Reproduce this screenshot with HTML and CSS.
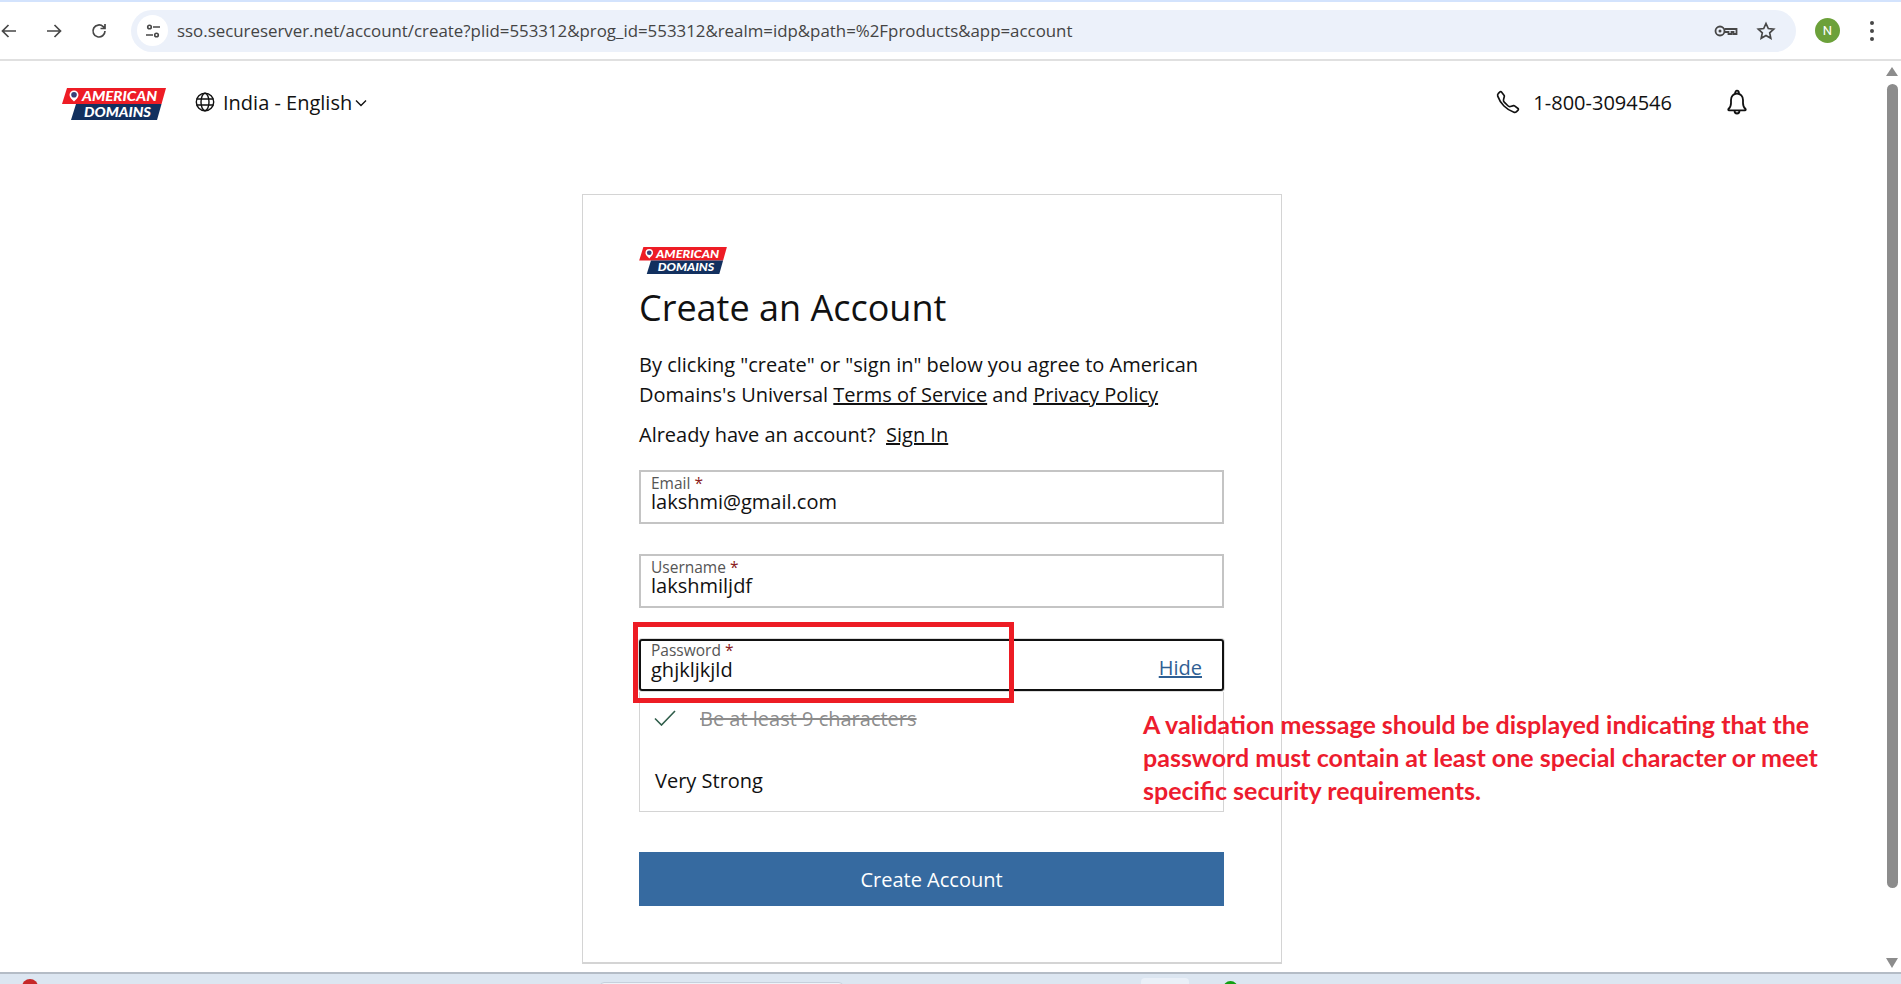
FILE: index.html
```html
<!DOCTYPE html>
<html lang="en">
<head>
<meta charset="utf-8">
<title>Create an Account</title>
<link rel="stylesheet" href="styles.css">
</head>
<body>
<div class="window">
  <div class="tabstrip"></div>
  <div class="toolbar">
    <div class="nav">
      <svg class="nav-icon" viewBox="0 0 20 20"><path d="M17 10H3.500M9.500 4l-6 6 6 6"/></svg>
      <svg class="nav-icon" viewBox="0 0 20 20"><path d="M3 10h13.500M10.500 4l6 6-6 6"/></svg>
      <svg class="nav-icon" viewBox="0 0 20 20"><path d="M16 10a6 6 0 1 1-1.800-4.300L16 7.500M16 3v4.500h-4.500"/></svg>
    </div>
    <div class="omnibox">
      <span class="tune"><svg viewBox="0 0 16 16"><circle cx="4.500" cy="4" r="1.800"/><path d="M8 4h7M1 12h7"/><circle cx="11.500" cy="12" r="1.800"/></svg></span>
      <span class="url">sso.secureserver.net/account/create?plid=553312&amp;prog_id=553312&amp;realm=idp&amp;path=%2Fproducts&amp;app=account</span>
      <svg class="key" viewBox="0 0 24 14"><circle cx="6" cy="7" r="4.500"/><circle cx="6" cy="7" r="1.500" class="fill"/><path d="M10.500 5h12v5h-3V8h-2v2h-3V8h-4"/></svg>
      <svg class="star" viewBox="0 0 20 20"><path d="M10 2.500l2.300 5 5.400.6-4 3.700 1.100 5.400-4.800-2.800-4.800 2.800 1.100-5.400-4-3.700 5.400-.6z"/></svg>
    </div>
    <div class="avatar">N</div>
    <div class="kebab"><i></i><i></i><i></i></div>
  </div>
  <div class="viewport">
    <div class="page">
      <header class="site-header">
        <div class="header-left">
          <svg class="logo logo-lg" viewBox="0 0 104 32"><polygon points="5,0 104,0 99.500,16 0,16" fill="#ee1c25"/><polygon points="14,16 99.500,16 95,32 9,32" fill="#12305f"/><path d="M12 2.500a4.500 4.500 0 0 1 4.500 4.500c0 2.500-2.500 4.500-4.500 6.500-2-2-4.500-4-4.500-6.500A4.500 4.500 0 0 1 12 2.500z" fill="#fff"/><circle cx="12" cy="6.800" r="2.800" fill="#3a3f78"/><text x="20" y="13" textLength="75" lengthAdjust="spacingAndGlyphs" class="logo-t">AMERICAN</text><text x="22" y="29" textLength="67" lengthAdjust="spacingAndGlyphs" class="logo-t">DOMAINS</text></svg>
          <div class="locale">
            <svg class="globe" viewBox="0 0 20 20"><circle cx="10" cy="10" r="8.700"/><ellipse cx="10" cy="10" rx="4" ry="8.700"/><path d="M1.500 7h17M1.500 13h17"/></svg>
            <span>India - English</span>
            <svg class="chev" viewBox="0 0 12 8"><path d="M1 1.500l5 5 5-5"/></svg>
          </div>
        </div>
        <div class="header-right">
          <svg class="phone" viewBox="0 0 16 16"><path d="M3.654 1.328a.678.678 0 0 0-1.015-.063L1.605 2.300c-.483.484-.661 1.169-.45 1.770a17.600 17.600 0 0 0 4.168 6.608 17.600 17.600 0 0 0 6.608 4.168c.601.211 1.286.033 1.770-.45l1.034-1.034a.678.678 0 0 0-.063-1.015l-2.307-1.794a.68.68 0 0 0-.58-.122l-2.190.547a1.750 1.750 0 0 1-1.657-.459L5.482 8.062a1.750 1.750 0 0 1-.46-1.657l.548-2.190a.68.68 0 0 0-.122-.58z"/></svg>
          <span class="phone-num">1-800-3094546</span>
          <svg class="bell" viewBox="0 0 22 26"><path d="M2.500 20c1.800-1.500 2.500-3.500 2.500-6v-3c0-3.500 2.500-6.500 6-6.500s6 3 6 6.500v3c0 2.500.7 4.500 2.500 6 .5.500.2 1.300-.5 1.300H3c-.7 0-1-.8-.5-1.300zM9 4.700c0-1.500.8-3 2-3s2 1.500 2 3M8.500 21.500c0 1.700 1.200 3 2.500 3s2.500-1.300 2.500-3"/></svg>
        </div>
      </header>
      <main class="card">
        <svg class="logo logo-sm" viewBox="0 0 104 32"><polygon points="5,0 104,0 99.500,16 0,16" fill="#ee1c25"/><polygon points="14,16 99.500,16 95,32 9,32" fill="#12305f"/><path d="M12 2.500a4.500 4.500 0 0 1 4.500 4.500c0 2.500-2.500 4.500-4.500 6.500-2-2-4.500-4-4.500-6.500A4.500 4.500 0 0 1 12 2.500z" fill="#fff"/><circle cx="12" cy="6.800" r="2.800" fill="#3a3f78"/><text x="20" y="13" textLength="75" lengthAdjust="spacingAndGlyphs" class="logo-t">AMERICAN</text><text x="22" y="29" textLength="67" lengthAdjust="spacingAndGlyphs" class="logo-t">DOMAINS</text></svg>
        <h1>Create an Account</h1>
        <p class="terms">By clicking "create" or "sign in" below you agree to American Domains's Universal <a href="#">Terms of Service</a> and <a href="#">Privacy Policy</a></p>
        <p class="signin">Already have an account?&nbsp; <a href="#">Sign In</a></p>
        <div class="field field-email">
          <label>Email <b>*</b></label>
          <div class="value">lakshmi@gmail.com</div>
        </div>
        <div class="field">
          <label>Username <b>*</b></label>
          <div class="value">lakshmiljdf</div>
        </div>
        <div class="pw-group">
          <div class="field field-focus">
            <div>
              <label>Password <b>*</b></label>
              <div class="value">ghjkljkjld</div>
            </div>
            <a href="#" class="hide">Hide</a>
          </div>
          <div class="rules">
            <div class="rule">
              <svg class="check" viewBox="0 0 22 16"><path d="M1 8.500l6.500 6.500L21 1"/></svg>
              <s>Be at least 9 characters</s>
            </div>
            <div class="strength">Very Strong</div>
          </div>
        </div>
        <button class="submit" type="button">Create Account</button>
      </main>
      <div class="highlight"></div>
      <p class="annotation">A validation message should be displayed indicating that the<br>password must contain at least one special character or meet<br>specific security requirements.</p>
    </div>
    <div class="scrollbar">
      <span class="arrow up"></span>
      <span class="thumb"></span>
      <span class="arrow down"></span>
    </div>
  </div>
  <div class="taskbar">
    <span class="tb-red"></span>
    <span class="tb-search"></span>
    <span class="tb-active"></span>
    <span class="tb-green"></span>
  </div>
</div>
</body>
</html>
```
FILE: styles.css
```css
* { box-sizing: border-box; }
html, body { margin: 0; height: 100%; overflow: hidden; }
body { font-family: "Open Sans", sans-serif; color: #111; background: #fff; }
.window { width: 1901px; height: 984px; display: flex; flex-direction: column; }
.tabstrip { height: 2px; background: #d3e3fd; flex: none; }
.toolbar { height: 59px; flex: none; display: flex; align-items: center; border-bottom: 2px solid #e0e0e0; background: #fff; }
.nav { display: flex; align-items: center; gap: 25px; width: 131px; padding-left: 0; flex: none; margin-left: -1px; margin-right: 1px; }
.nav-icon { width: 20px; height: 20px; fill: none; stroke: #474747; stroke-width: 1.700; flex: none; }
.omnibox { width: 1665px; height: 42px; border-radius: 21px; background: #ecf1fa; display: flex; align-items: center; padding: 0 20px 0 6px; flex: none; }
.tune { width: 31px; height: 31px; border-radius: 50%; background: #fff; display: flex; align-items: center; justify-content: center; flex: none; }
.tune svg { width: 16px; height: 16px; fill: none; stroke: #474747; stroke-width: 1.600; }
.url { font-size: 16.870px; color: #444; margin-left: 9px; flex: 1; white-space: nowrap; }
.key { width: 24px; height: 14px; fill: none; stroke: #474747; stroke-width: 1.800; margin-right: 18px; }
.key .fill { fill: #474747; stroke: none; }
.star { width: 20px; height: 20px; fill: none; stroke: #474747; stroke-width: 1.700; }
.avatar { width: 25px; height: 25px; border-radius: 50%; background: #6ca13a; color: #fff; font-family: "Roboto", sans-serif; font-size: 13px; display: flex; align-items: center; justify-content: center; margin-left: 19px; flex: none; }
.kebab { display: flex; flex-direction: column; gap: 4px; margin-left: 30px; flex: none; }
.kebab i { width: 4px; height: 4px; border-radius: 50%; background: #474747; display: block; }
.viewport { flex: 1; position: relative; display: flex; min-height: 0; }
.page { flex: 1; position: relative; min-width: 0; }
.site-header { height: 50px; margin-top: 16px; display: flex; justify-content: space-between; align-items: center; padding: 0 153px 0 62px; }
.header-left, .header-right { display: flex; align-items: center; }
.logo { display: block; flex: none; }
.logo-lg { width: 104px; height: 32px; margin-top: 3px; }
.logo-sm { width: 88px; height: 27px; }
.logo-t { font-family: "Lato", sans-serif; font-weight: 900; font-style: italic; font-size: 14px; fill: #fff; }
.locale { display: flex; align-items: center; margin-left: 29px; font-size: 20px; }
.globe { width: 20px; height: 20px; fill: none; stroke: #111; stroke-width: 1.400; margin-right: 8px; }
.chev { width: 12px; height: 8px; fill: none; stroke: #111; stroke-width: 1.400; margin-left: 3px; margin-top: 2px; }
.phone { width: 24px; height: 24px; fill: none; stroke: #111; stroke-width: 1.100; }
.phone-num { font-size: 20px; margin-left: 13px; }
.bell { width: 22px; height: 26px; fill: none; stroke: #111; stroke-width: 1.800; margin-left: 54px; }
.card { position: absolute; left: 582px; top: 133px; width: 700px; height: 770px; border: 1px solid #d4d4d4; border-bottom-width: 2px; padding: 52px 56px 0; background: #fff; }
h1 { font-size: 36px; font-weight: 400; line-height: 49px; margin: 9px 0 0; }
.terms { font-size: 20px; line-height: 30px; margin: 18px 0 0; width: 560px; }
.terms a, .signin a { color: #111; text-decoration: underline; }
.signin { font-size: 20px; line-height: 30px; margin: 10px 0 0; }
.field { width: 585px; height: 54px; border: 2px solid #c4c4c4; padding: 4px 10px 0; margin-bottom: 30px; }
.field-email { margin-top: 20px; }
.field label { display: block; font-size: 15.500px; line-height: 14px; color: #555; }
.field label b { font-weight: 400; color: #8b1a1a; }
.value { font-size: 20px; line-height: 24px; color: #111; }
.pw-group { width: 585px; margin-top: 31px; }
.field-focus { height: 52px; border-color: #111; border-radius: 3px; margin-bottom: 0; display: flex; justify-content: space-between; padding: 2px 20px 0 10px; box-shadow: 0 0 0 1px #ddd; }
.field-focus .value { margin-top: 1px; }
.hide { font-size: 20px; color: #2f5f94; text-decoration: underline; align-self: center; margin-top: 3px; }
.rules { height: 120px; border: 1px solid #d4d4d4; border-top: 0; margin-top: 1px; }
.rule { display: flex; align-items: center; height: 52px; padding-left: 14px; font-size: 20px; color: #8c8c8c; }
.check { width: 22px; height: 16px; fill: none; stroke: #2f5d4a; stroke-width: 1.600; margin-right: 24px; }
.strength { font-size: 20px; padding-left: 15px; margin-top: 21px; line-height: 32px; }
.submit { display: block; width: 585px; height: 54px; margin-top: 40px; background: #366aa0; border: 0; color: #fff; font: 400 20px "Open Sans", sans-serif; }
.highlight { position: absolute; left: 633px; top: 561px; width: 381px; height: 81px; border: 5px solid #ed1c24; }
.annotation { position: absolute; left: 1143px; top: 647px; margin: 0; font-family: "Lato", sans-serif; font-weight: 700; font-size: 25px; line-height: 33px; color: #ed1c2e; white-space: nowrap; }
.scrollbar { width: 12px; position: absolute; right: 3px; top: 0; bottom: 0; display: flex; flex-direction: column; align-items: center; }
.thumb { width: 11px; height: 804px; background: #8c8c8c; border-radius: 6px; margin-top: 8px; display: block; }
.arrow { width: 0; height: 0; border-left: 6px solid transparent; border-right: 6px solid transparent; display: block; }
.arrow.up { border-bottom: 9px solid #8c8c8c; margin-top: 6px; }
.arrow.down { border-top: 10px solid #8c8c8c; margin-top: auto; margin-bottom: 4px; }
.taskbar { height: 12px; flex: none; background: #dce6f1; border-top: 2px solid #b4bcc6; position: relative; overflow: hidden; }
.tb-red, .tb-green, .tb-search, .tb-active { position: absolute; display: block; }
.tb-red { left: 22px; top: 5px; width: 16px; height: 16px; border-radius: 50%; background: #c62828; }
.tb-green { left: 1223px; top: 7px; width: 15px; height: 15px; border-radius: 50%; background: #12a012; }
.tb-search { left: 600px; top: 8px; width: 243px; height: 12px; background: #eef3f9; border: 1px solid #c6d0dc; border-radius: 4px; }
.tb-active { left: 1141px; top: 4px; width: 48px; height: 20px; background: #eaf0f8; border-radius: 4px; }
```
